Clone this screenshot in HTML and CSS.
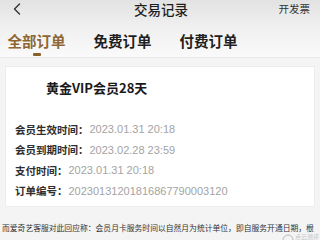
FILE: index.html
```html
<!DOCTYPE html>
<html lang="zh">
<head>
<meta charset="utf-8">
<link rel="stylesheet" href="styles.css">
</head>
<body>
<div class="top">
  <div class="header">
    <div class="back">
      <svg width="10" height="12" viewBox="0 0 10 12"><path d="M7.5 1 L2.5 6 L7.5 11" fill="none" stroke="#333" stroke-width="1.4" stroke-linecap="round" stroke-linejoin="round"/></svg>
    </div>
    <div class="title">交易记录</div>
    <div class="invoice">开发票</div>
  </div>
  <div class="tabs">
    <div class="tab active"><span>全部订单</span><i class="bar"></i></div>
    <div class="tab"><span>免费订单</span></div>
    <div class="tab"><span>付费订单</span></div>
  </div>
</div>
<div class="main">
  <div class="card">
    <div class="name">黄金VIP会员28天</div>
    <div class="rows">
      <div class="row"><span class="label">会员生效时间：</span><span class="value">2023.01.31 20:18</span></div>
      <div class="row"><span class="label">会员到期时间：</span><span class="value">2023.02.28 23:59</span></div>
      <div class="row"><span class="label">支付时间：</span><span class="value">2023.01.31 20:18</span></div>
      <div class="row"><span class="label">订单编号：</span><span class="value">20230131201816867790003120</span></div>
    </div>
  </div>
  <p class="note">而爱奇艺客服对此回应称：会员月卡服务时间以自然月为统计单位，即自服务开通日期，根</p>
  <div class="mark"><svg width="12" height="6" viewBox="0 0 12 6"><path d="M1 6 A5 5 0 0 1 11 6" fill="none" stroke="#bbb" stroke-width="1"/></svg><span>点云测评</span></div>
</div>
</body>
</html>
```
FILE: styles.css
```css
* { box-sizing: border-box; margin: 0; padding: 0; }
html, body { width: 320px; height: 240px; overflow: hidden; }
body {
  background: #f4f4f4;
  font-family: "Noto Sans CJK SC", "Liberation Sans", sans-serif;
  color: #222;
  position: relative;
}
.top {
  background: linear-gradient(#e2e2e2 0%, #efefef 45%, #fafafa 100%);
  height: 58px;
  border-bottom: 1px solid #ebebeb;
}
.header {
  display: grid;
  grid-template-columns: 1fr auto 1fr;
  align-items: center;
  height: 18px;
  padding: 0 10px 0 12px;
}
.back { display: flex; align-items: center; }
.title { font-size: 13.5px; font-weight: 500; color: #1e1e1e; line-height: 18px; }
.invoice { justify-self: end; font-size: 10.5px; color: #333; line-height: 16px; }
.tabs {
  display: flex;
  gap: 27px;
  padding: 13px 0 0 7px;
}
.tab {
  display: flex;
  flex-direction: column;
  align-items: center;
  font-size: 14.5px;
  font-weight: 700;
  line-height: 20px;
  color: #1f1f1f;
  width: 59px;
}
.tab.active { color: #8d6634; }
.bar {
  display: block;
  width: 8px;
  height: 2.5px;
  border-radius: 1px;
  background: #8a5f2c;
  margin-top: 2px;
}
.main { padding: 8px 5px 0; }
.card {
  background: #fff;
  border: 1px solid #ededed;
  height: 141px;
  padding: 13px 0 0 9px;
}
.name {
  font-size: 13px;
  font-weight: 700;
  color: #1a1a1a;
  line-height: 16px;
  padding-left: 31px;
}
.rows { margin-top: 23px; }
.row {
  display: flex;
  align-items: center;
  height: 20.5px;
  font-size: 10.5px;
}
.label { font-weight: 700; color: #2e2e2e; }
.value { color: #a3a3a3; font-family: "Liberation Sans", sans-serif; font-size: 11px; margin-left: 1px; }
.note {
  margin: 16px 0 0 -3px;
  font-size: 7.8px;
  line-height: 10px;
  color: #333;
  white-space: nowrap;
}
.mark {
  position: absolute;
  right: 1px;
  bottom: 0;
  display: flex;
  align-items: flex-end;
  gap: 1px;
  font-size: 6px;
  line-height: 6px;
  color: #c4c4c4;
}
```
